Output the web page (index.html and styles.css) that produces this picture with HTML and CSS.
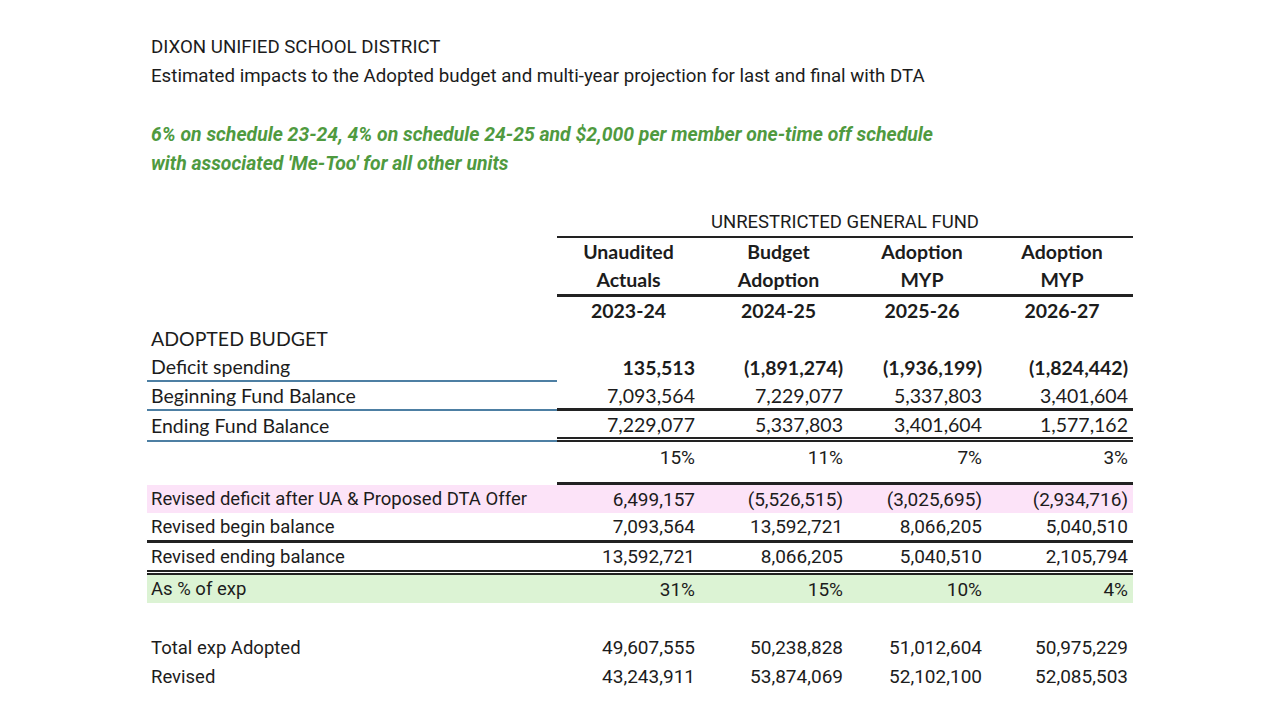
FILE: index.html
```html
<!DOCTYPE html>
<html>
<head>
<meta charset="utf-8">
<link rel="stylesheet" href="styles.css">
</head>
<body>
<div class="page">
  <div class="heading">
    <div class="line">DIXON UNIFIED SCHOOL DISTRICT</div>
    <div class="line">Estimated impacts to the Adopted budget and multi-year projection for last and final with DTA</div>
  </div>
  <div class="note">
    <div class="line">6% on schedule 23-24, 4% on schedule 24-25 and $2,000 per member one-time off schedule</div>
    <div class="line">with associated 'Me-Too' for all other units</div>
  </div>
  <div class="budget">
    <div class="row fund">
      <div class="cell"></div>
      <div class="cell fund-title">UNRESTRICTED GENERAL FUND</div>
    </div>
    <div class="row hdr h-a">
      <div class="cell"></div><div class="cell">Unaudited</div><div class="cell">Budget</div><div class="cell">Adoption</div><div class="cell">Adoption</div>
    </div>
    <div class="row hdr h-b">
      <div class="cell"></div><div class="cell">Actuals</div><div class="cell">Adoption</div><div class="cell">MYP</div><div class="cell">MYP</div>
    </div>
    <div class="row hdr h-c">
      <div class="cell"></div><div class="cell">2023-24</div><div class="cell">2024-25</div><div class="cell">2025-26</div><div class="cell">2026-27</div>
    </div>
    <div class="row cal r-section">
      <div class="cell label">ADOPTED BUDGET</div>
    </div>
    <div class="row cal r-deficit">
      <div class="cell label blue-under">Deficit spending</div><div class="cell num">135,513</div><div class="cell num">(1,891,274)</div><div class="cell num">(1,936,199)</div><div class="cell num">(1,824,442)</div>
    </div>
    <div class="row cal r-begin">
      <div class="cell label blue-under">Beginning Fund Balance</div><div class="cell num">7,093,564</div><div class="cell num">7,229,077</div><div class="cell num">5,337,803</div><div class="cell num">3,401,604</div>
    </div>
    <div class="row cal r-end">
      <div class="cell label blue-under">Ending Fund Balance</div><div class="cell num">7,229,077</div><div class="cell num">5,337,803</div><div class="cell num">3,401,604</div><div class="cell num">1,577,162</div>
    </div>
    <div class="row r-pct">
      <div class="cell label"></div><div class="cell num">15%</div><div class="cell num">11%</div><div class="cell num">7%</div><div class="cell num">3%</div>
    </div>
    <div class="row r-pink">
      <div class="cell label">Revised deficit after UA &amp; Proposed DTA Offer</div><div class="cell num">6,499,157</div><div class="cell num">(5,526,515)</div><div class="cell num">(3,025,695)</div><div class="cell num">(2,934,716)</div>
    </div>
    <div class="row r-rbegin">
      <div class="cell label">Revised begin balance</div><div class="cell num">7,093,564</div><div class="cell num">13,592,721</div><div class="cell num">8,066,205</div><div class="cell num">5,040,510</div>
    </div>
    <div class="row r-rend">
      <div class="cell label">Revised ending balance</div><div class="cell num">13,592,721</div><div class="cell num">8,066,205</div><div class="cell num">5,040,510</div><div class="cell num">2,105,794</div>
    </div>
    <div class="row r-green">
      <div class="cell label">As % of exp</div><div class="cell num">31%</div><div class="cell num">15%</div><div class="cell num">10%</div><div class="cell num">4%</div>
    </div>
    <div class="row r-total">
      <div class="cell label">Total exp Adopted</div><div class="cell num">49,607,555</div><div class="cell num">50,238,828</div><div class="cell num">51,012,604</div><div class="cell num">50,975,229</div>
    </div>
    <div class="row">
      <div class="cell label">Revised</div><div class="cell num">43,243,911</div><div class="cell num">53,874,069</div><div class="cell num">52,102,100</div><div class="cell num">52,085,503</div>
    </div>
  </div>
</div>
</body>
</html>
```

FILE: styles.css
```css
html, body {
  margin: 0;
  padding: 0;
  background: #ffffff;
}
body {
  font-family: Roboto, "Liberation Sans", sans-serif;
  color: #1c1c1c;
  font-size: 18.5px;
}
.page {
  padding: 32px 0 0 151px;
}
.heading .line {
  line-height: 30px;
  height: 29px;
  font-size: 18.7px;
}
.heading {
  margin-bottom: 30px;
}
.note {
  color: #4f9a3f;
  font-weight: bold;
  font-style: italic;
  font-size: 19.4px;
  line-height: 29px;
  margin-bottom: 29px;
}
.budget {
  margin-left: -4px;
  width: 986px;
}
.row {
  display: grid;
  grid-template-columns: 410px 143px 148px 139px 146px;
  height: 29px;
}
.cell {
  box-sizing: border-box;
  height: 100%;
  white-space: nowrap;
  display: flex;
  align-items: center;
  justify-content: flex-end;
  padding: 0 5px 0 4px;
}
.cell.label {
  justify-content: flex-start;
}
.num {
  font-size: 19px;
}

/* header block */
.fund {
  height: 31px;
}
.fund-title {
  grid-column: 2 / 6;
  justify-content: center;
  border-bottom: 2px solid #222;
  padding: 0;
}
.hdr .cell {
  justify-content: center;
  font-family: Lato, "Open Sans", sans-serif;
  font-weight: bold;
  font-size: 19.5px;
  padding: 0;
}
.hdr .cell:nth-child(3),
.hdr .cell:nth-child(4) {
  padding-left: 9px;
}
.hdr .cell:nth-child(5) {
  padding-left: 4px;
}
.h-a { height: 27px; }
.h-b { height: 32px; }
.h-b .cell + .cell { border-bottom: 3px solid #222; }
.h-c { height: 27px; }

/* adopted budget (calibri-style) */
.cal .cell {
  font-family: Lato, "Open Sans", sans-serif;
  font-size: 19.5px;
}
.r-section { height: 29px; }
.r-deficit .num { font-weight: bold; }
.blue-under {
  border-bottom: 2px solid #4d7fa3;
}
.r-begin .num { border-bottom: 3px solid #222; }
.r-end { height: 31px; }
.r-end .num { border-bottom: 5px double #222; }

.r-pct {
  height: 43px;
}
.r-pct .cell {
  align-items: flex-start;
  padding-top: 4px;
}
.r-pct .num { border-bottom: 3px solid #222; }

.r-pink {
  height: 28px;
  background: #fce3f8;
}
.r-rbegin { height: 30px; }
.r-rbegin .cell { border-bottom: 3px solid #222; }
.r-rend { height: 32px; }
.r-rend .cell { border-bottom: 5px double #222; }
.r-green {
  height: 28px;
  background: #dcf3d4;
}
.r-total {
  margin-top: 30px;
}
```
